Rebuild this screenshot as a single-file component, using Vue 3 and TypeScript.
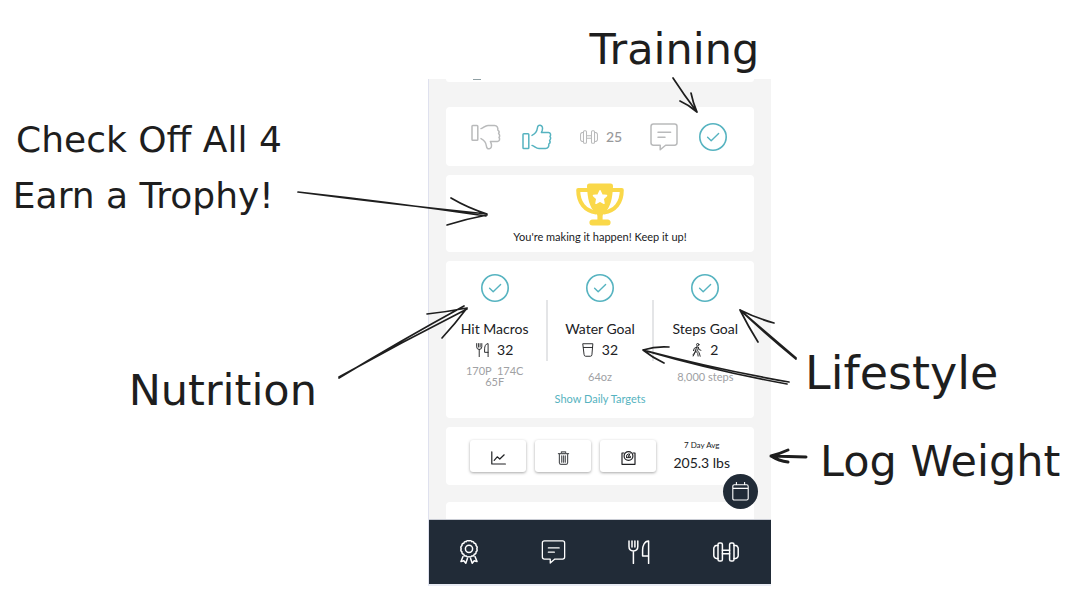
<script setup lang="ts">
interface Goal {
  name: string
  icon: 'food' | 'water' | 'walk'
  count: number
  detail: string[]
}

interface Note {
  id: string
  text: string
}

const goals: Goal[] = [
  { name: 'Hit Macros', icon: 'food', count: 32, detail: ['170P\u00a0 174C', '65F'] },
  { name: 'Water Goal', icon: 'water', count: 32, detail: ['64oz'] },
  { name: 'Steps Goal', icon: 'walk', count: 2, detail: ['8,000 steps'] },
]

const notes: Note[] = [
  { id: 'n-training', text: 'Training' },
  { id: 'n-check', text: 'Check Off All 4' },
  { id: 'n-trophy', text: 'Earn a Trophy!' },
  { id: 'n-nutrition', text: 'Nutrition' },
  { id: 'n-lifestyle', text: 'Lifestyle' },
  { id: 'n-weight', text: 'Log Weight' },
]
</script>

<template>
  <svg class="defs" width="0" height="0" aria-hidden="true">
    <symbol id="i-check" viewBox="0 0 28 28">
      <circle cx="14" cy="14" r="13.2" stroke-width="1.6" />
      <path d="M8.6 14.2 L12.2 17.8 L19.6 10.6" stroke-width="1.4" />
    </symbol>
    <symbol id="i-thumb" viewBox="0 0 30 26">
      <path d="M1.8 9.8 H6 Q6.8 9.8 6.8 10.6 V23.8 Q6.8 24.6 6 24.6 H1.8 Q1 24.6 1 23.8 V10.6 Q1 9.8 1.8 9.8 Z" />
      <path d="M10 11.4 C13 10 15 7.4 15.4 4 C15.6 1.8 17 .9 18.2 1.2 C20.4 1.7 21 4 20.2 6.4 L19.4 8.6 H26.4 C28.6 8.8 29.2 11 28 12.4 C29 13.6 28.8 15.4 27.6 16.3 C28.4 17.6 28 19.2 26.8 20 C27.2 22.4 26 24.6 23.6 24.6 H17 C14 24.6 12.6 22.2 10 21.4" />
    </symbol>
    <symbol id="i-dumbbell" viewBox="0 0 26 20">
      <path d="M9.4 8.2 H16.6 M9.4 11.8 H16.6" />
      <rect x="5" y=".9" width="4.4" height="18.2" rx="1.6" />
      <rect x="16.6" y=".9" width="4.4" height="18.2" rx="1.6" />
      <path d="M5 3.6 H3.4 Q2 3.6 1.6 4.6 Q.8 5.2 .8 6.4 V13.6 Q.8 14.8 1.6 15.4 Q2 16.4 3.4 16.4 H5 M21 3.6 H22.6 Q24 3.6 24.4 4.6 Q25.2 5.2 25.2 6.4 V13.6 Q25.2 14.8 24.4 15.4 Q24 16.4 22.6 16.4 H21" />
    </symbol>
    <symbol id="i-comment" viewBox="0 0 28 28">
      <path d="M3.4 1 H24.6 Q27 1 27 3.4 V19.8 Q27 22.2 24.6 22.2 H15.6 L10.2 26.8 V22.2 H3.4 Q1 22.2 1 19.8 V3.4 Q1 1 3.4 1 Z M8 9.2 H20.6 M8 14.2 H15" />
    </symbol>
    <symbol id="i-food" viewBox="0 0 22 24">
      <path d="M1 1 V6.6 Q1 11 5.4 11 Q9.8 11 9.8 6.6 V1 M4 1 V7 M6.9 1 V7 M5.4 11 V23.4 M20.6 23.4 V1 C16.4 1 14.6 6 14.6 10 V16 H20.6" />
    </symbol>
    <symbol id="i-water" viewBox="0 0 12 15">
      <path d="M.8 .8 H11.2 L10.2 12.6 Q10 14.2 8.6 14.2 H3.4 Q2 14.2 1.8 12.6 Z M1.2 4.8 H10.8" />
    </symbol>
    <symbol id="i-walk" viewBox="0 0 10 15">
      <circle cx="5.8" cy="1.8" r="1.3" />
      <path d="M4.6 4.4 L6.4 4.4 L7.2 7 L9.2 7.8 M4.6 4.4 L2 5.8 L1.2 8.2 M4.4 4.6 L3.6 8.8 L1 14 M6.4 5 L5.6 8.4 L7.4 10.6 L8.4 14.2 M4 9 L5.8 11.2 L6.2 14 M3.2 7.4 L3 9.6 L.6 12.8" />
    </symbol>
    <symbol id="i-award" viewBox="0 0 18 24">
      <path d="M9 .9 Q10.6 -.1 11.7 1.7 Q13.8 1.2 14.2 3.3 Q16.4 3.6 16 5.7 Q17.8 6.9 16.8 8.8 Q17.8 10.8 16 11.9 Q16.4 14 14.2 14.3 Q13.8 16.4 11.7 15.9 Q10.6 17.7 9 16.7 Q7.4 17.7 6.3 15.9 Q4.2 16.4 3.8 14.3 Q1.6 14 2 11.9 Q.2 10.8 1.2 8.8 Q.2 6.9 2 5.7 Q1.6 3.6 3.8 3.3 Q4.2 1.2 6.3 1.7 Q7.4 -.1 9 .9 Z" />
      <circle cx="9" cy="8.8" r="3.6" />
      <path d="M3 16.4 L1 21.6 L3.8 20.8 L5.8 23.2 L7.4 18.6 M15 16.4 L17 21.6 L14.2 20.8 L12.2 23.2 L10.6 18.6" />
    </symbol>
  </svg>

  <main class="board">
    <section class="phone" aria-label="Daily tracker">
      <div class="feed">
        <div class="card previous"><span class="dot"></span></div>

        <div class="card reactions">
          <div class="pair">
            <button class="plain grey" aria-label="Dislike"><svg class="thumb down"><use href="#i-thumb" /></svg></button>
            <button class="plain teal" aria-label="Like"><svg class="thumb"><use href="#i-thumb" /></svg></button>
          </div>
          <div class="streak grey"><svg class="mini-bell"><use href="#i-dumbbell" /></svg><span>25</span></div>
          <div class="pair">
            <button class="plain grey" aria-label="Comment"><svg class="ring"><use href="#i-comment" /></svg></button>
            <button class="plain teal" aria-label="Training done"><svg class="ring"><use href="#i-check" /></svg></button>
          </div>
        </div>

        <div class="card trophy">
          <svg class="cup" viewBox="0 0 48 43" aria-hidden="true">
            <path d="M12 7 H2.2 C2.2 20 9 28 20 29.4 M36 7 H45.8 C45.8 20 39 28 28 29.4" fill="none" stroke="#fad849" stroke-width="4" stroke-linejoin="round" />
            <path fill="#fad849" d="M13.5 .5 H34.5 Q37.2 .5 37 3.4 C36.6 15 34.4 25 28.6 29.2 Q26.6 30.8 26.6 33 V36.6 H31.6 Q34.6 37 34.6 39.6 Q34.6 42.5 31.6 42.5 H16.4 Q13.4 42.5 13.4 39.6 Q13.4 37 16.4 36.6 H21.4 V33 Q21.4 30.8 19.4 29.2 C13.6 25 11.4 15 11 3.4 Q10.8 .5 13.5 .5 Z" />
            <path fill="#fff" stroke="#fff" stroke-linejoin="round" d="M24 7.8 L26 12 L30.5 12.6 L27.2 15.8 L28 20.3 L24 18.1 L20 20.3 L20.8 15.8 L17.5 12.6 L22 12 Z" />
          </svg>
          <p>You're making it happen! Keep it up!</p>
        </div>

        <div class="card goals">
          <div class="columns">
            <div v-for="goal in goals" :key="goal.name" class="goal">
              <button class="plain teal" :aria-label="goal.name"><svg class="ring"><use href="#i-check" /></svg></button>
              <h2>{{ goal.name }}</h2>
              <div class="count">
                <svg :class="goal.icon"><use :href="'#i-' + goal.icon" /></svg>
                <span>{{ goal.count }}</span>
              </div>
              <p class="detail"><span v-for="line in goal.detail" :key="line">{{ line }}</span></p>
            </div>
          </div>
          <a href="#targets">Show Daily Targets</a>
        </div>

        <div class="card weight">
          <div class="tools">
            <button class="tool" aria-label="Weight chart">
              <svg viewBox="0 0 15 14"><path d="M.8 .8 V13 H14.4 M3.2 9.4 L6.2 5.8 L8.8 8 L13.2 3.8" /></svg>
            </button>
            <button class="tool dim" aria-label="Delete weight">
              <svg viewBox="0 0 15 14"><path d="M2.4 2.6 H12.6 M5.4 2.4 V.8 H9.6 V2.4 M3.4 2.8 V11.8 Q3.4 13.3 4.8 13.3 H10.2 Q11.6 13.3 11.6 11.8 V2.8 M5.7 4.8 V11.2 M7.5 4.8 V11.2 M9.3 4.8 V11.2" /></svg>
            </button>
            <button class="tool" aria-label="Log weight">
              <svg viewBox="0 0 15 14"><path d="M3 2 H1 V13.3 H14 V2 H12" /><circle cx="7.5" cy="5" r="4.4" /><path d="M5.4 6.6 Q4.8 3 7.6 2.8 M6.6 6.8 L9 2.6 M8 4.8 Q9.8 4.4 9.6 6.6 H7" stroke-width="1" /></svg>
            </button>
          </div>
          <div class="average"><small>7 Day Avg</small><strong>205.3 lbs</strong></div>
        </div>

        <div class="card next"></div>
        <button class="calendar" aria-label="Open calendar">
          <svg viewBox="0 0 17 19"><path d="M2.4 2.8 H14.6 Q16.2 2.8 16.2 4.4 V16.4 Q16.2 18 14.6 18 H2.4 Q.8 18 .8 16.4 V4.4 Q.8 2.8 2.4 2.8 Z M4.4 .4 V2.8 M12.6 .4 V2.8 M.8 6.4 H16.2" /></svg>
        </button>
      </div>

      <nav>
        <a href="#awards" aria-label="Awards"><svg class="award"><use href="#i-award" /></svg></a>
        <a href="#messages" aria-label="Messages"><svg class="message"><use href="#i-comment" /></svg></a>
        <a href="#nutrition" aria-label="Nutrition"><svg class="meals"><use href="#i-food" /></svg></a>
        <a href="#training" aria-label="Training"><svg class="bell"><use href="#i-dumbbell" /></svg></a>
      </nav>
    </section>

    <span v-for="note in notes" :key="note.id" class="note" :class="note.id">{{ note.text }}</span>

    <svg class="arrows" viewBox="0 0 1072 614" preserveAspectRatio="none" aria-hidden="true">
      <path d="M673 78 Q684 95 697 112 M697 112 Q693 103 691 93 M697 112 Q689 105 680 101" />
      <path d="M298 192 Q390 204 487 214 M298 192 Q390 202 486 216 M487 214 Q468 208 451 198 M487 215 Q466 219 447 225" />
      <path d="M339 378 Q400 341 464 306 M339 377 Q402 342 467 309 M467 308 Q446 312 427 314 M467 308 Q455 324 442 338" />
      <path d="M796 358 L740 310 M796 359 Q768 336 741 311 M740 310 Q756 318 774 323 M740 310 Q748 326 758 342" />
      <path d="M789 382 Q715 369 643 350 M787 384 Q715 371 646 351 M643 350 Q656 346 669 347 M643 350 Q653 358 664 363" />
      <path class="bold" d="M806 457 L771 456 M771 456 Q779 454 788 450 M771 456 Q779 461 788 462" />
    </svg>
  </main>
</template>

<style>
body {
  margin: 0;
  background: #fff;
}
</style>

<style scoped>
.defs {
  position: absolute;
}
.board {
  position: relative;
  display: grid;
  grid-template-columns: 428fr 343fr 301fr;
  align-items: start;
  min-height: 614px;
  box-sizing: border-box;
  padding-top: 79px;
  overflow: hidden;
  font-family: Lato, sans-serif;
  color: #202124;
}
svg {
  display: block;
  fill: none;
  stroke: currentColor;
  stroke-width: 1.5;
  stroke-linecap: round;
  stroke-linejoin: round;
}
button {
  font: inherit;
  cursor: pointer;
}
p,
h2 {
  margin: 0;
}
.phone {
  grid-column: 2;
  border-left: 1px solid #dfe1ee;
  border-bottom: 2px solid #e9ecf4;
}
.feed {
  position: relative;
  display: flex;
  flex-direction: column;
  gap: 9px;
  padding: 0 17px;
  background: #f4f4f4;
}
.card {
  background: #fff;
  border-radius: 4px;
}
.previous {
  height: 3px;
  margin-bottom: 16px;
  border-radius: 0 0 4px 4px;
}
.dot {
  display: block;
  width: 8px;
  height: 1px;
  margin-left: 27px;
  background: #8f9fa3;
}
.plain {
  display: block;
  padding: 0;
  border: 0;
  background: none;
}
.grey {
  color: #b9babb;
}
.teal {
  color: #56b3c0;
}
.ring {
  width: 28px;
  height: 28px;
}
.reactions {
  display: flex;
  align-items: center;
  justify-content: space-between;
  height: 59px;
  padding: 0 27px 0 25px;
}
.pair {
  display: flex;
  align-items: center;
  gap: 21px;
}
.thumb {
  width: 30px;
  height: 26px;
}
.down {
  transform: scaleY(-1);
}
.streak {
  display: flex;
  align-items: center;
  gap: 8px;
}
.streak span {
  font-size: 14px;
  line-height: 16px;
  font-weight: 500;
  color: #98999b;
}
.mini-bell {
  width: 18px;
  height: 14px;
}
.trophy {
  display: flex;
  flex-direction: column;
  align-items: center;
  gap: 4px;
  padding: 8px 0;
  font-size: 11px;
  line-height: 14px;
}
.cup {
  width: 48px;
  height: 43px;
  stroke: none;
}
.goals {
  display: flex;
  flex-direction: column;
  align-items: center;
  padding: 13px 0 11px;
}
.columns {
  display: grid;
  grid-template-columns: repeat(3, 1fr);
  align-self: stretch;
  margin: 0 -4px;
}
.goal {
  position: relative;
  display: flex;
  flex-direction: column;
  align-items: center;
}
.goal + .goal::before {
  content: '';
  position: absolute;
  left: -1px;
  top: 26px;
  width: 2px;
  height: 61px;
  background: #e4e5e7;
}
.goal h2 {
  margin-top: 18px;
  font-size: 14px;
  line-height: 18px;
  font-weight: 400;
}
.count {
  display: flex;
  align-items: center;
  gap: 8px;
  margin-top: 3px;
  font-size: 14px;
  line-height: 18px;
}
.count svg {
  height: 14px;
  stroke-width: 1;
}
.count .food {
  width: 13px;
  stroke-width: 1.6;
}
.water {
  width: 12px;
}
.walk {
  width: 10px;
}
.detail {
  display: flex;
  flex-direction: column;
  justify-content: center;
  align-items: center;
  height: 34px;
  font-size: 11px;
  line-height: 11px;
  color: #a0a1a4;
}
.goals > a {
  font-size: 11px;
  line-height: 16px;
  margin-top: -2px;
  color: #56b3c0;
  text-decoration: none;
}
.weight {
  display: flex;
  align-items: center;
  justify-content: space-between;
  height: 58px;
  padding: 0 24px;
}
.tools {
  display: flex;
  gap: 9px;
}
.tool {
  display: grid;
  place-items: center;
  width: 56px;
  height: 32px;
  padding: 3px 0 0;
  border: 0;
  border-radius: 3px;
  background: #fff;
  color: #202124;
  box-shadow: 0 1px 3px rgba(0, 0, 0, 0.35);
}
.tool svg {
  width: 15px;
  height: 14px;
  stroke-width: 1.2;
}
.dim {
  color: #55575a;
}
.average {
  display: flex;
  flex-direction: column;
  align-items: center;
  padding-bottom: 2px;
}
.average small {
  font-size: 8px;
  line-height: 16px;
}
.average strong {
  font-size: 14px;
  line-height: 20px;
  font-weight: 400;
}
.next {
  height: 17px;
  margin-top: 8px;
  border-radius: 4px 4px 0 0;
}
.calendar {
  position: absolute;
  right: 13px;
  bottom: 10px;
  display: grid;
  place-items: center;
  width: 35px;
  height: 35px;
  padding: 0;
  border: 0;
  border-radius: 50%;
  background: #212b37;
  color: #fff;
}
.calendar svg {
  width: 17px;
  height: 19px;
  stroke-width: 1.1;
}
nav {
  display: flex;
  align-items: center;
  justify-content: space-between;
  height: 65px;
  padding: 0 32px 0 31px;
  background: #212b37;
  border-top: 1px solid #c9ccd4;
  box-sizing: border-box;
}
nav a {
  color: #fff;
}
.award {
  width: 18px;
  height: 24px;
}
.message {
  width: 25px;
  height: 24px;
}
.meals {
  width: 22px;
  height: 24px;
}
.bell {
  width: 26px;
  height: 20px;
}
.note {
  position: absolute;
  font-family: Virgil, 'DejaVu Sans', sans-serif;
  font-size: 43px;
  line-height: 50px;
  white-space: nowrap;
  color: #1e1e1e;
}
.n-training {
  left: 55%;
  top: 24px;
}
.n-check {
  left: 1.5%;
  top: 115px;
  font-size: 36px;
}
.n-trophy {
  left: 1.2%;
  top: 171px;
  font-size: 36px;
}
.n-nutrition {
  left: 12%;
  top: 365px;
}
.n-lifestyle {
  left: 75.1%;
  top: 348px;
  font-size: 46px;
}
.n-weight {
  left: 76.5%;
  top: 436px;
}
.arrows {
  position: absolute;
  left: 0;
  top: 0;
  width: 100%;
  height: 614px;
  color: #1e1e1e;
  stroke-width: 1.7;
  pointer-events: none;
}
.bold {
  stroke-width: 3;
}
</style>
